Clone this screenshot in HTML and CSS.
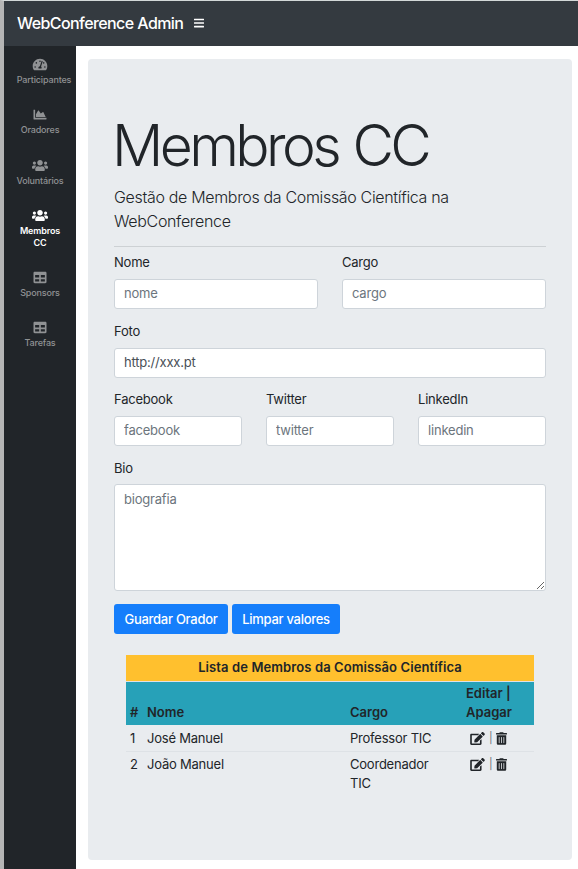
FILE: index.html
```html
<!DOCTYPE html>
<html lang="pt">
<head>
<meta charset="utf-8">
<title>WebConference Admin</title>
<link rel="stylesheet" href="styles.css">
</head>
<body>
<svg class="sprite" aria-hidden="true">
  <symbol id="gauge" viewBox="0 0 576 512"><path d="M288 32C128.94 32 0 160.94 0 320c0 52.8 14.25 102.26 39.06 144.8 5.61 9.62 16.3 15.2 27.44 15.2h443c11.14 0 21.83-5.58 27.44-15.2C561.75 422.26 576 372.8 576 320c0-159.06-128.94-288-288-288zm0 64c14.71 0 26.58 10.13 30.32 23.65-1.11 2.26-2.64 4.23-3.45 6.67l-9.22 27.67c-5.13 3.49-10.97 6.01-17.64 6.01-17.67 0-32-14.33-32-32S270.33 96 288 96zM96 384c-17.67 0-32-14.33-32-32s14.33-32 32-32 32 14.33 32 32-14.33 32-32 32zm48-160c-17.67 0-32-14.33-32-32s14.33-32 32-32 32 14.33 32 32-14.33 32-32 32zm246.77-72.41l-61.33 184C343.13 347.33 352 364.54 352 384c0 11.72-3.38 22.55-8.88 32H232.88c-5.5-9.45-8.88-20.28-8.88-32 0-33.94 26.5-61.43 59.9-63.59l61.34-184.01c4.17-12.56 17.73-19.45 30.36-15.17 12.57 4.19 19.35 17.79 15.17 30.36zm14.66 57.2l15.52-46.55c3.47-1.29 7.13-2.23 11.05-2.23 17.67 0 32 14.33 32 32s-14.33 32-32 32c-11.38-.01-20.89-6.28-26.57-15.22zM480 384c-17.67 0-32-14.33-32-32s14.33-32 32-32 32 14.33 32 32-14.33 32-32 32z"/></symbol>
  <symbol id="chart" viewBox="0 0 512 512"><path d="M500 384c6.6 0 12 5.4 12 12v40c0 6.6-5.4 12-12 12H12c-6.6 0-12-5.4-12-12V76c0-6.6 5.4-12 12-12h40c6.6 0 12 5.4 12 12v308h436zM372.7 159.5L288 216l-85.3-113.7c-5.1-6.8-15.5-6.3-19.9 1L96 248v104h384l-89.9-187.8c-3.2-6.5-11.4-8.7-17.4-4.7z"/></symbol>
  <symbol id="users" viewBox="0 0 640 512"><path d="M96 224c35.3 0 64-28.7 64-64s-28.7-64-64-64-64 28.7-64 64 28.7 64 64 64zm448 0c35.3 0 64-28.7 64-64s-28.7-64-64-64-64 28.7-64 64 28.7 64 64 64zm32 32h-64c-17.6 0-33.5 7.1-45.1 18.6 40.3 22.1 68.9 62 75.1 109.4h66c17.7 0 32-14.3 32-32v-32c0-35.3-28.7-64-64-64zm-256 0c61.9 0 112-50.1 112-112S381.9 32 320 32 208 82.1 208 144s50.1 112 112 112zm76.8 32h-8.3c-20.8 10-43.9 16-68.5 16s-47.6-6-68.5-16h-8.3C179.6 288 128 339.6 128 403.2V432c0 26.5 21.5 48 48 48h288c26.5 0 48-21.5 48-48v-28.8c0-63.6-51.6-115.2-115.2-115.2zm-223.7-13.4C161.5 263.1 145.6 256 128 256H64c-35.3 0-64 28.7-64 64v32c0 17.7 14.3 32 32 32h65.9c6.3-47.4 34.9-87.3 75.2-109.4z"/></symbol>
  <symbol id="table" viewBox="0 0 512 512"><path d="M464 32H48C21.49 32 0 53.49 0 80v352c0 26.51 21.49 48 48 48h416c26.51 0 48-21.49 48-48V80c0-26.51-21.49-48-48-48zM224 416H64v-96h160v96zm0-160H64v-96h160v96zm224 160H288v-96h160v96zm0-160H288v-96h160v96z"/></symbol>
  <symbol id="edit" viewBox="0 0 576 512"><path d="M402.6 83.2l90.2 90.2c3.8 3.8 3.8 10 0 13.8L274.4 405.6l-92.8 10.3c-12.4 1.4-22.9-9.1-21.5-21.5l10.3-92.8L388.8 83.2c3.8-3.8 10-3.8 13.8 0zm162-22.9l-48.8-48.8c-15.2-15.2-39.9-15.2-55.2 0l-35.4 35.4c-3.8 3.8-3.8 10 0 13.8l90.2 90.2c3.8 3.8 10 3.8 13.8 0l35.4-35.4c15.2-15.3 15.2-40 0-55.2zM384 346.2V448H64V128h229.8c3.2 0 6.2-1.3 8.5-3.5l40-40c7.6-7.6 2.2-20.5-8.5-20.5H48C21.5 64 0 85.5 0 112v352c0 26.5 21.5 48 48 48h352c26.5 0 48-21.5 48-48V306.2c0-10.7-12.9-16-20.5-8.5l-40 40c-2.2 2.3-3.5 5.3-3.5 8.5z"/></symbol>
  <symbol id="trash" viewBox="0 0 448 512"><path d="M32 464a48 48 0 0 0 48 48h288a48 48 0 0 0 48-48V128H32zm272-256a16 16 0 0 1 32 0v224a16 16 0 0 1-32 0zm-96 0a16 16 0 0 1 32 0v224a16 16 0 0 1-32 0zm-96 0a16 16 0 0 1 32 0v224a16 16 0 0 1-32 0zM432 32H312l-9.4-18.7A24 24 0 0 0 281.1 0H166.8a23.72 23.72 0 0 0-21.4 13.3L136 32H16A16 16 0 0 0 0 48v32a16 16 0 0 0 16 16h416a16 16 0 0 0 16-16V48a16 16 0 0 0-16-16z"/></symbol>
  <symbol id="bars" viewBox="0 0 448 512"><rect y="60" width="448" height="72" rx="16"/><rect y="220" width="448" height="72" rx="16"/><rect y="380" width="448" height="72" rx="16"/></symbol>
</svg>
<header class="navbar">
  <span class="brand">WebConference Admin</span>
  <svg class="bars"><use href="#bars"/></svg>
</header>
<div class="wrapper">
  <nav class="sidebar">
    <a class="item participants"><svg><use href="#gauge"/></svg><span>Participantes</span></a>
    <a class="item"><svg><use href="#chart"/></svg><span>Oradores</span></a>
    <a class="item"><svg><use href="#users"/></svg><span>Voluntários</span></a>
    <a class="item active"><svg><use href="#users"/></svg><span>Membros<br>CC</span></a>
    <a class="item"><svg><use href="#table"/></svg><span>Sponsors</span></a>
    <a class="item"><svg><use href="#table"/></svg><span>Tarefas</span></a>
  </nav>
  <main class="content">
    <section class="jumbotron">
      <h1>Membros CC</h1>
      <p class="lead">Gestão de Membros da Comissão Científica na WebConference</p>
      <hr>
      <form>
        <div class="row">
          <label class="field">Nome<input type="text" placeholder="nome"></label>
          <label class="field">Cargo<input type="text" placeholder="cargo"></label>
        </div>
        <div class="row">
          <label class="field">Foto<input type="text" value="http://xxx.pt"></label>
        </div>
        <div class="row">
          <label class="field">Facebook<input type="text" placeholder="facebook"></label>
          <label class="field">Twitter<input type="text" placeholder="twitter"></label>
          <label class="field">LinkedIn<input type="text" placeholder="linkedin"></label>
        </div>
        <div class="row">
          <label class="field bio">Bio<textarea placeholder="biografia"></textarea></label>
        </div>
        <div class="actions">
          <button type="button" class="save">Guardar Orador</button>
          <button type="button" class="clear">Limpar valores</button>
        </div>
      </form>
      <table>
        <colgroup><col class="c-num"><col class="c-name"><col class="c-role"><col class="c-act"></colgroup>
        <thead>
          <tr class="title"><th colspan="4">Lista de Membros da Comissão Científica</th></tr>
          <tr class="heads"><th>#</th><th>Nome</th><th>Cargo</th><th>Editar | Apagar</th></tr>
        </thead>
        <tbody>
          <tr><td>1</td><td>José Manuel</td><td class="role">Professor TIC</td><td><div class="tools"><svg class="edit"><use href="#edit"/></svg><span>|</span><svg class="trash"><use href="#trash"/></svg></div></td></tr>
          <tr><td>2</td><td>João Manuel</td><td class="role">Coordenador TIC</td><td><div class="tools"><svg class="edit"><use href="#edit"/></svg><span>|</span><svg class="trash"><use href="#trash"/></svg></div></td></tr>
        </tbody>
      </table>
    </section>
  </main>
</div>
</body>
</html>
```
FILE: styles.css
```css
* { box-sizing: border-box; }
html { background: #fff; }
body {
  margin: 0;
  height: 869px;
  border-top: 1px solid #d3d8d8;
  border-left: 4px solid #b5b5b5;
  overflow: hidden;
  font: 400 13px/19px Inter, sans-serif;
  letter-spacing: -0.22px;
  color: #212529;
}
svg { fill: currentColor; display: block; }
.sprite { display: none; }

.navbar {
  height: 45px;
  padding-left: 13px;
  display: flex;
  align-items: center;
  gap: 11px;
  background: #343a40;
  color: #fff;
}
.brand { font-size: 16px; font-weight: 500; letter-spacing: -0.58px; }
.bars { width: 10px; height: 12px; margin-top: -2px; }

.wrapper { display: flex; height: 823px; }
.sidebar {
  width: 72px;
  padding: 12px 10px;
  background: #212529;
  color: #909294;
}
.item {
  display: flex;
  flex-direction: column;
  align-items: center;
  gap: 3px;
  margin-bottom: 22.3px;
  font-size: 9px;
  line-height: 12px;
  letter-spacing: -0.15px;
  font-weight: 500;
  text-align: center;
  white-space: nowrap;
}
.item svg { width: 16px; height: 13px; }
.participants span { margin-left: 8px; }
.active { color: #fff; font-weight: 600; }

.content { flex: 1; padding: 13px 6px 0 12px; }
.jumbotron {
  height: 801px;
  padding: 53px 26px 0;
  border-radius: 4px;
  background: #e9ecef;
}
h1 {
  margin: 0 0 5px -2px;
  font-size: 57px;
  line-height: 68px;
  font-weight: 300;
  letter-spacing: -3.6px;
  word-spacing: 2px;
}
.lead { margin: 0; font-size: 16px; line-height: 24px; font-weight: 300; letter-spacing: -0.33px; }
hr { margin: 13px 0 6px; border: 0; border-top: 1px solid #cdd1d4; }

.row { display: flex; gap: 24px; margin-bottom: 12.6px; }
.field { flex: 1; min-width: 0; display: flex; flex-direction: column; gap: 7px; }
.bio { gap: 6px; }
input, textarea {
  width: 100%;
  height: 30px;
  padding: 3px 9px 5px;
  border: 1px solid #ced4da;
  border-radius: 3px;
  background: #fff;
  font: inherit;
  letter-spacing: -0.2px;
  color: #495057;
}
textarea { height: 107px; padding-top: 5px; }
::placeholder { color: #6c757d; opacity: 1; }

.actions { display: flex; gap: 4px; padding-top: 1px; }
button {
  height: 30px;
  padding: 0;
  border: 0;
  border-radius: 3px;
  background: #157efb;
  color: #fff;
  font: 500 13px/19px Inter, sans-serif;
  letter-spacing: -0.28px;
}
.save { width: 114px; }
.clear { width: 108px; }

table {
  width: 408px;
  margin: 21px 12px 0;
  table-layout: fixed;
  border-collapse: collapse;
}
.c-num { width: 17px; }
.c-name { width: 203px; }
.c-role { width: 116px; }
th, td { padding: 3px 4px; text-align: left; vertical-align: top; }
th { padding: 2px 4px 3px; font-weight: 600; letter-spacing: 0; vertical-align: bottom; }
.title th { height: 26px; padding-bottom: 4px; background: #ffc02e; text-align: center; letter-spacing: 0.1px; border-bottom: 1px solid #dee2e6; }
.heads { background: #27a1b8; }
tbody tr:first-child td { padding-top: 4px; }
td.role { padding-right: 20px; }
tbody tr + tr td { border-top: 1px solid #dee2e6; }
.tools { display: flex; align-items: center; height: 19px; padding-left: 4px; gap: 4px; letter-spacing: 0; }
.tools span { width: 3px; font-size: 11px; color: #6c757d; }
.edit { width: 15px; height: 13px; }
.trash { width: 11px; height: 13px; }
```
